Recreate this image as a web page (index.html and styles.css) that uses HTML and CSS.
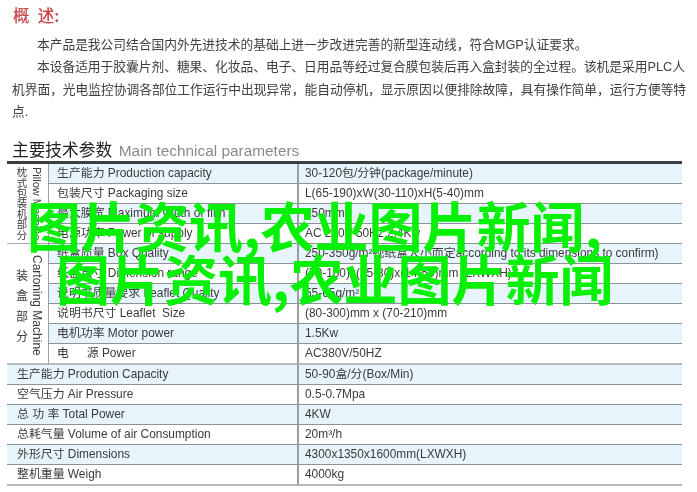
FILE: index.html
```html
<!DOCTYPE html>
<html lang="zh">
<head>
<meta charset="utf-8">
<title>概述</title>
<link rel="stylesheet" href="styles.css">
</head>
<body>
<main class="page">
  <h1 class="overview-title">概&ensp;述:</h1>
  <p class="para">本产品是我公司结合国内外先进技术的基础上进一步改进完善的新型连动线&#xFF0C;符合MGP认证要求。</p>
  <p class="para">本设备适用于胶囊片剂、糖果、化妆品、电子、日用品等经过复合膜包装后再入盒封装的全过程。该机是采用PLC人机界面&#xFF0C;光电监控协调各部位工作运行中出现异常&#xFF0C;能自动停机&#xFF0C;显示原因以便排除故障&#xFF0C;具有操作简单&#xFF0C;运行方便等特点.</p>
  <h2 class="spec-title">主要技术参数 <span class="spec-title-en">Main technical parameters</span></h2>
  <table class="spec">
    <colgroup><col class="c1"><col class="c2"><col></colgroup>
    <tbody>
      <tr class="tint">
        <th rowspan="4" class="group"><div class="group-in"><span class="v-cn">枕式包装机部分</span><span class="v-en tight">Pillow Machine</span></div></th>
        <td class="sub">生产能力 Production capacity</td><td class="val">30-120包/分钟(package/minute)</td>
      </tr>
      <tr><td class="sub">包装尺寸 Packaging size</td><td class="val">L(65-190)xW(30-110)xH(5-40)mm</td></tr>
      <tr class="tint"><td class="sub">最大膜宽 Maximum width of film</td><td class="val">250mm</td></tr>
      <tr class="group-end"><td class="sub">电源功率 Power of supply</td><td class="val">AC 220V 50Hz 2.4Kw</td></tr>
      <tr class="tint">
        <th rowspan="6" class="group"><div class="group-in"><span class="v-cn wide">装盒部分</span><span class="v-en">Cartoning Machine</span></div></th>
        <td class="sub">纸盒质量 Box Quality</td><td class="val">250-350g/m²视纸盒大小而定according to its dimensions to confirm)</td>
      </tr>
      <tr><td class="sub">纸盒尺寸 Dimension range</td><td class="val">(70-180)x(35-80)x(14-50)mm (LXWXH)</td></tr>
      <tr class="tint"><td class="sub">说明书质量要求 Leaflet Quality</td><td class="val">55-65g/m²</td></tr>
      <tr><td class="sub">说明书尺寸 Leaflet&nbsp; Size</td><td class="val">(80-300)mm x (70-210)mm</td></tr>
      <tr class="tint"><td class="sub">电机功率 Motor power</td><td class="val">1.5Kw</td></tr>
      <tr class="section-end"><td class="sub">电&emsp;&ensp;源 Power</td><td class="val">AC380V/50HZ</td></tr>
      <tr class="tint"><td colspan="2" class="main">生产能力 Prodution Capacity</td><td class="val">50-90盒/分(Box/Min)</td></tr>
      <tr><td colspan="2" class="main">空气压力 Air Pressure</td><td class="val">0.5-0.7Mpa</td></tr>
      <tr class="tint"><td colspan="2" class="main">总 功 率 Total Power</td><td class="val">4KW</td></tr>
      <tr><td colspan="2" class="main">总耗气量 Volume of air Consumption</td><td class="val">20m³/h</td></tr>
      <tr class="tint"><td colspan="2" class="main">外形尺寸 Dimensions</td><td class="val">4300x1350x1600mm(LXWXH)</td></tr>
      <tr class="section-end"><td colspan="2" class="main">整机重量 Weigh</td><td class="val">4000kg</td></tr>
    </tbody>
  </table>
</main>
<div class="overlay">
  <div class="ol-1">图片资讯,农业图片新闻,</div>
  <div class="ol-2">图片资讯,农业图片新闻</div>
</div>
</body>
</html>
```
FILE: styles.css
```css
html, body { margin: 0; padding: 0; background: #fff; }
body {
  width: 697px;
  height: 492px;
  overflow: hidden;
  position: relative;
  font-family: "Liberation Sans", "Noto Sans CJK SC", sans-serif;
  color: #3a3a3a;
}
.page { padding: 4px 8px 0 12px; filter: blur(0.35px); }
.overview-title {
  margin: 0 0 0 1px;
  font-size: 16.5px;
  line-height: 22px;
  font-weight: 500;
  color: #c8474a;
  font-family: "Noto Sans CJK SC", sans-serif;
  height: 30px;
}
.para {
  margin: 0;
  font-size: 12.72px;
  line-height: 22.3px;
  text-indent: 25px;
  color: #404040;
}
.spec-title {
  margin: 16px 0 0;
  height: 22px;
  font-size: 16.7px;
  line-height: 24px;
  font-weight: 400;
  color: #222;
  white-space: nowrap;
}
.spec-title-en { font-size: 15.4px; color: #8a8a8a; margin-left: 2px; }
.spec {
  margin-left: -5px;
  width: 675px;
  table-layout: fixed;
  border-collapse: separate;
  border-spacing: 0;
  border-top: 3px solid #3a3f44;
  font-size: 11.9px;
}
.c1 { width: 41px; }
.c2 { width: 249px; }
.spec tr { height: 20px; }
.spec td, .spec th {
  padding: 0;
  height: 19px;
  line-height: 19px;
  border-bottom: 1px solid #8d9296;
  font-weight: 400;
  white-space: nowrap;
  overflow: hidden;
}
.tint td { background: #e8f4fb; }
.sub { padding-left: 8px !important; border-left: 1px solid #9aa0a4; }
.main { padding-left: 10px !important; }
.val { padding-left: 6px !important; border-left: 2px solid #9aa0a4; }
.section-end td { border-bottom: 2px solid #b5b9bc; height: 18px; }
.group { background: #fff; }
.spec th.group { border-bottom: 1px solid #a6aaad; vertical-align: middle; }
.spec tr:nth-child(5) th.group { border-bottom: 2px solid #b5b9bc; }
.group-in { display: flex; justify-content: center; gap: 2px; align-items: center; }
.v-cn, .v-en { writing-mode: vertical-rl; line-height: 14px; white-space: nowrap; }
.v-cn { width: 16px; font-size: 10.4px; }
.v-cn.wide { font-size: 12px; letter-spacing: 8.6px; margin-top: 14px; }
.v-en { width: 14px; font-size: 12px; margin-top: 4px; }
.v-en.tight { font-size: 11px; margin-top: 0; }
.overlay {
  position: absolute;
  left: 0;
  top: 0;
  width: 697px;
  color: #08f008;
  font-family: "Noto Sans CJK SC", sans-serif;
  font-size: 54px;
  font-weight: 700;
  line-height: 55px;
  white-space: nowrap;
}
.ol-1 { position: absolute; left: 27px; top: 197px; }
.ol-2 { position: absolute; left: 56px; top: 250px; }
```
